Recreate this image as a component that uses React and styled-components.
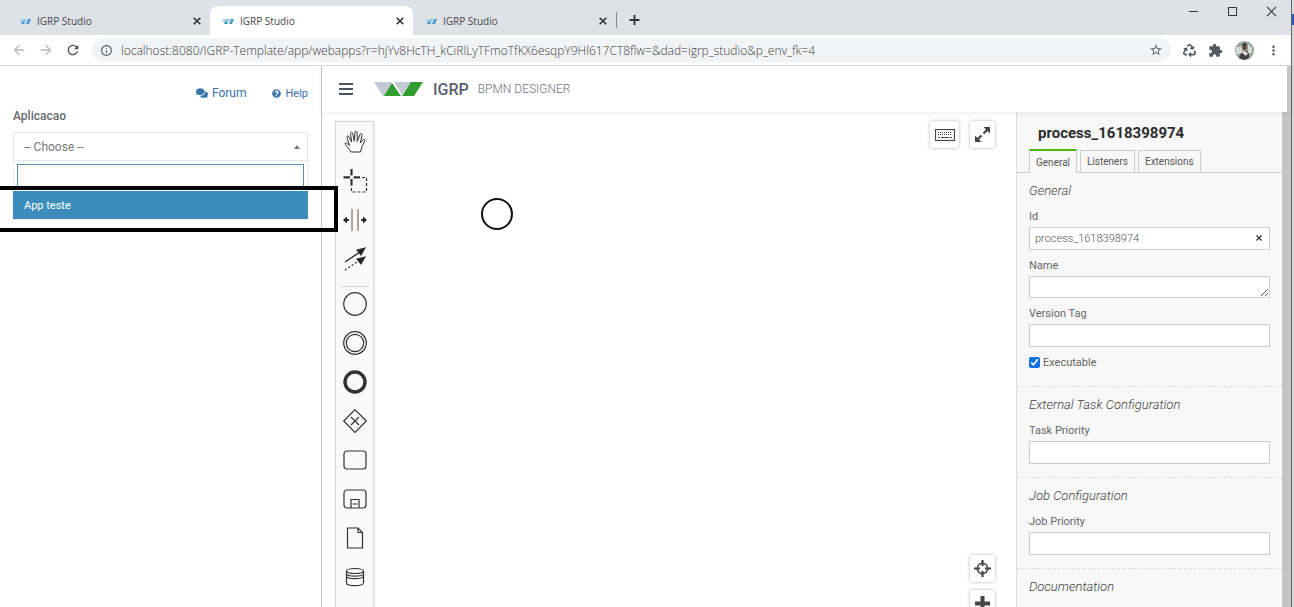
import React from "react";
import styled, { createGlobalStyle, css } from "styled-components";
import { FaComments, FaQuestionCircle, FaRecycle } from "react-icons/fa";
import {
  MdArrowBack,
  MdArrowForward,
  MdRefresh,
  MdInfoOutline,
  MdStarOutline,
  MdExtension,
  MdMoreVert,
} from "react-icons/md";

const GlobalStyle = createGlobalStyle`
  *, *::before, *::after { box-sizing: border-box; }
  body { margin: 0; overflow: hidden; font-family: Roboto, "Liberation Sans", sans-serif; color: #555; background: #fff; }
  button, input, select, textarea { font: inherit; color: inherit; margin: 0; }
  button { padding: 0; border: 0; background: none; cursor: pointer; }
  svg { display: block; flex: none; }
`;

const Desktop = styled.div`
  display: flex;
  height: 100vh;
  overflow: hidden;
`;

const DesktopEdge = styled.div`
  flex: none;
  width: 3px;
  border-left: 1px solid #666;
  background: linear-gradient(#dfe0e2 14px, #1c5fa8 14px, #1c5fa8 25px, #d6d6d6 25px);
`;

const Browser = styled.div`
  flex: 1;
  min-width: 0;
  display: flex;
  flex-direction: column;
`;

/* Browser chrome */
const TabStrip = styled.div`
  flex: none;
  display: flex;
  align-items: flex-end;
  height: 35px;
  padding-left: 7px;
  background: #dee1e6;
  font-family: "Open Sans", "Noto Sans", sans-serif;
`;

const Tab = styled.div`
  display: flex;
  align-items: center;
  gap: 6px;
  width: 203px;
  height: 29px;
  padding: 0 9px 0 11px;
  border-radius: 8px 8px 0 0;
  background: ${(p) => (p.$active ? "#fff" : "transparent")};
  color: #45484c;
  font-size: 10px;
`;

const TabTitle = styled.span`
  flex: 1;
`;

const NewTab = styled.button`
  display: flex;
  align-items: center;
  height: 30px;
`;

const WindowControls = styled.div`
  display: flex;
  gap: 28px;
  margin: 0 14px 0 auto;
  align-self: flex-start;
  padding-top: 6px;
`;

const Toolbar = styled.div`
  flex: none;
  display: flex;
  align-items: center;
  height: 31px;
  padding: 0 10px 0 11px;
  border-bottom: 1px solid #dcdcdc;
  color: #5f6368;
`;

const NavButtons = styled.div`
  display: flex;
  gap: 11px;
  padding-right: 11px;
`;

const IconButton = styled.button`
  display: flex;
  color: ${(p) => (p.$muted ? "#b4b6b9" : "#55585c")};
`;

const Omnibox = styled.label`
  flex: 1;
  display: flex;
  align-items: center;
  gap: 8px;
  height: 24px;
  padding: 0 8px;
  border-radius: 12px;
  background: #f1f3f4;
`;

const Address = styled.input`
  flex: 1;
  min-width: 0;
  padding: 0;
  border: 0;
  outline: 0;
  background: none;
  font-family: "Open Sans", "Noto Sans", sans-serif;
  font-size: 12px;
  font-weight: 300;
  color: #3c4045;
`;

const ToolbarActions = styled.div`
  display: flex;
  align-items: center;
  gap: 12px;
  padding-left: 12px;
`;

/* Page */
const Page = styled.div`
  flex: 1;
  min-height: 0;
  display: flex;
`;

const Sidebar = styled.aside`
  flex: none;
  width: 322px;
  padding: 18px 13px 0;
  border-right: 1px solid #c9c9c9;
`;

const Links = styled.nav`
  display: flex;
  justify-content: flex-end;
  align-items: center;
  gap: 26px;
  height: 18px;
`;

const TextLink = styled.a`
  display: flex;
  align-items: center;
  gap: 4px;
  color: #3a73a8;
  text-decoration: none;
  font-size: ${(p) => (p.$large ? 12 : 11)}px;
`;

const SelectLabel = styled.label`
  display: block;
  margin: 6px 0 8px;
  font-size: 12px;
  line-height: 16px;
  font-weight: 500;
  color: #666a70;
`;

const SelectBox = styled.div`
  position: relative;
  border: 1px solid #e6e6e6;
  &::after {
    content: "";
    position: absolute;
    right: 7px;
    top: 12px;
    border: 3px solid transparent;
    border-top: 0;
    border-bottom: 4px solid #777;
  }
`;

const Select = styled.select`
  display: block;
  width: 100%;
  height: 27px;
  padding: 0 10px;
  border: 0;
  appearance: none;
  background: #fff;
  color: #777;
  font-size: 12px;
`;

const SearchRow = styled.div`
  padding: 3px 3px 0;
  border: solid #eee;
  border-width: 0 1px;
`;

const SearchInput = styled.input`
  display: block;
  width: 100%;
  height: 25px;
  padding: 0 6px;
  border: 1px solid #5c8fb5;
  outline: 0;
`;

const Options = styled.div`
  padding-top: 2px;
`;

const Option = styled.button`
  display: block;
  width: 100%;
  height: 28px;
  padding: 0 11px;
  background: #3c8dbc;
  color: #fff;
  font-size: 11px;
  text-align: left;
`;

const Highlight = styled.div`
  position: absolute;
  z-index: 1;
  top: 186px;
  left: -4px;
  width: 342px;
  height: 46px;
  border: 4px solid #000;
  pointer-events: none;
`;

const Main = styled.main`
  flex: 1;
  min-width: 0;
  display: flex;
  flex-direction: column;
`;

const Header = styled.header`
  position: relative;
  flex: none;
  display: flex;
  align-items: center;
  height: 46px;
  padding: 0 16px;
  border-right: 4px solid #c6c6c6;
  background: #fff;
  box-shadow: 0 1px 6px rgba(0, 0, 0, 0.08);
`;

const Logo = styled.svg`
  margin: 0 10px 0 20px;
`;

const Brand = styled.span`
  margin-right: 9px;
  color: #5b5f6d;
  font-size: 16px;
  font-weight: 500;
`;

const Product = styled.span`
  color: #6e7280;
  font-size: 12px;
  font-weight: 300;
`;

const Workspace = styled.div`
  flex: 1;
  min-height: 0;
  display: flex;
`;

const Canvas = styled.section`
  position: relative;
  flex: 1;
  min-width: 0;
  padding: 9px 0 0 13px;
`;

const Palette = styled.div`
  display: flex;
  flex-direction: column;
  align-items: center;
  gap: 11px;
  width: 39px;
  height: 100%;
  padding-top: 6px;
  border: 1px solid #d6d6d6;
  border-bottom: 0;
  background: #fafafa;
  box-shadow: 1px 0 2px rgba(0, 0, 0, 0.08);
`;

const PaletteButton = styled.button`
  flex: none;
  width: 28px;
  height: 28px;
`;

const PaletteRule = styled.hr`
  width: 29px;
  margin: 2px 0 -8px;
  border: 0;
  border-top: 1px solid #d6d6d6;
`;

const StartEvent = styled.svg`
  position: absolute;
  left: 158px;
  top: 85px;
`;

const floating = css`
  position: absolute;
  right: 21px;
  display: flex;
`;

const TopControls = styled.div`
  ${floating}
  top: 9px;
  gap: 11px;
`;

const ZoomControls = styled.div`
  ${floating}
  bottom: -10px;
  flex-direction: column;
  gap: 8px;
`;

const ControlButton = styled.button`
  display: flex;
  align-items: center;
  justify-content: center;
  width: ${(p) => (p.$wide ? 29 : 25)}px;
  height: 27px;
  border-radius: 2px;
  background: #fff;
  box-shadow: 0 0 3px rgba(0, 0, 0, 0.35);
`;

const Properties = styled.aside`
  flex: none;
  width: 275px;
  padding-top: 12px;
  border-left: 1px solid #ddd;
  border-right: 9px solid #c4c4c4;
  background: #f8f8f8;
  overflow: hidden;
`;

const ProcessTitle = styled.h1`
  margin: 0 0 7px 21px;
  color: #2c2c2c;
  font-size: 15px;
  line-height: 18px;
  font-weight: 700;
`;

const PanelTabs = styled.div`
  display: flex;
  gap: 3px;
  height: 24px;
  padding-left: 12px;
  border-bottom: 1px solid #ccc;
`;

const PanelTab = styled.button`
  height: ${(p) => (p.$active ? 24 : 22)}px;
  align-self: flex-end;
  margin-bottom: ${(p) => (p.$active ? -1 : 0)}px;
  padding: 0 6px;
  border: 1px solid #ccc;
  border-bottom: 0;
  border-top: ${(p) => (p.$active ? "2px solid #52b415" : "1px solid #ccc")};
  background: #f8f8f8;
  color: #555;
  font-size: 10px;
`;

const Group = styled.section`
  padding: 9px 12px 13px;
  border-bottom: 1px dashed #ddd;
`;

const GroupTitle = styled.h2`
  margin: 0 0 9px;
  font-size: 13px;
  line-height: 18px;
  font-weight: 300;
  font-style: italic;
  color: #444;
`;

const Field = styled.div`
  position: relative;
  & + & { margin-top: 8px; }
`;

const FieldLabel = styled.label`
  display: flex;
  align-items: center;
  gap: 3px;
  margin-bottom: 3px;
  font-size: 11px;
  line-height: 15px;
  color: #666;
`;

const fieldBox = css`
  display: block;
  width: 100%;
  padding: 0 5px;
  border: 1px solid #ccc;
  background: #fff;
  font-size: 11px;
  font-weight: 300;
`;

const TextInput = styled.input`
  ${fieldBox}
  height: 23px;
`;

const TextArea = styled.textarea`
  ${fieldBox}
  height: 22px;
  resize: vertical;
`;

const ClearButton = styled.button`
  position: absolute;
  right: 8px;
  bottom: 7px;
  height: 10px;
`;

const Checkbox = styled.input`
  width: 11px;
  height: 11px;
  accent-color: #0b70e0;
`;

const Avatar = () => (
  <svg width="19" height="19" viewBox="0 0 19 19">
    <circle cx="9.500" cy="9.500" r="9.500" fill="#99a19b" />
    <path d="M1 6h6v7H1zM13 3l4 4v5h-4z" fill="#d7dcd8" />
    <path d="M4 17l2-5 2-2h4l2 3v4a9 9 0 0 1-10 0z" fill="#424344" />
    <path d="M6 11l3-1 4 2-2 3z" fill="#e8e1dc" />
    <ellipse cx="9.500" cy="6" rx="2.300" ry="3" fill="#5f4539" />
    <path d="M7 4q2.500-4 5 0z" fill="#292522" />
  </svg>
);

const Favicon = () => (
  <svg width="13" height="8" viewBox="0 0 13 8">
    <path d="M0 2h6L4 7z" fill="#bcd8ea" />
    <path d="M3 7l2-4 2 4zM8 7l2-5h3l-2 5z" fill="#4a9bcb" />
    <path d="M5 2h4L7 6z" fill="#8fc1df" />
  </svg>
);

const Cross = ({ size = 8, width = 1.6, color = "#333" }) => (
  <svg width={size} height={size} viewBox="0 0 8 8" stroke={color} strokeWidth={width}>
    <path d="M.7.7l6.600 6.600M7.300.7L.7 7.300" />
  </svg>
);

const paletteTools = [
  ["Hand tool", <path key="a" strokeWidth="1" d="M10 24L8.500 21.500L4.300 16.500c-.8-1.100.4-2.100 1.500-1.300L8.500 17.500L6 9.500c-.5-1.600 1.300-2.200 1.900-.6L10.700 14L9.500 5.500c-.2-1.600 1.900-1.900 2.200-.2L13.300 13L14 4.500c.1-1.600 2.200-1.500 2.200.1L16.200 13.500L19 6.500c.5-1.400 2.400-.8 2 .7L19.300 15L22.300 11.500c.9-1 2.300 0 1.600 1.200L21 18.500L19.500 24z" />],
  ["Lasso tool", <g key="a"><path d="M10.500 2v6.500M10.500 12v6.500M2.500 10.300h6.500M12.500 10.300h6.500" strokeWidth="2.200" /><path d="M21 10.500h4.500V25H10.500v-5" strokeDasharray="3 2" /></g>],
  ["Space tool", <g key="a"><path d="M11 3v22M17 3v22" stroke="#776f68" /><path d="M8 14H4M20 14h4" strokeWidth="2" /><path d="M2 14l4-3.500v7zM26 14l-4-3.500v7z" fill="#222" stroke="none" /></g>],
  ["Connect tool", <g key="a"><path d="M4 17L19 7" strokeWidth="1.500" /><path d="M4 25l15-10" strokeDasharray="2 2" /><path d="M24 3l-8 2 4 5zM24 12l-8 2 4 5z" fill="#222" /></g>],
];

const paletteShapes = [
  ["Start event", <circle key="a" cx="14" cy="14" r="11.300" />],
  ["Intermediate event", <g key="a"><circle cx="14" cy="14" r="11.300" /><circle cx="14" cy="14" r="8.700" /></g>],
  ["End event", <circle key="a" cx="14" cy="14" r="10" strokeWidth="3.400" />],
  ["Gateway", <path key="a" d="M14 2.700L25.300 14 14 25.300 2.700 14zM10 10l8 8M18 10l-8 8" />],
  ["Task", <rect key="a" x="3" y="5" width="22" height="18" rx="3" />],
  ["Sub process", <g key="a"><rect x="3" y="5" width="22" height="18" rx="3" /><path d="M10 23v-8.500h8V23M11.500 19h5" /></g>],
  ["Data object", <path key="a" d="M6.500 4H17l4.500 4.500V24h-15zM17 4v4.500h4.500" />],
  ["Data store", <g key="a"><ellipse cx="14" cy="8" rx="8.500" ry="2.500" /><path d="M5.500 8v12c0 3.500 17 3.500 17 0V8M5.500 10.500c0 3.500 17 3.500 17 0M5.500 13c0 3.500 17 3.500 17 0" /></g>],
];

function Tools({ items }) {
  return items.map(([name, drawing]) => (
    <PaletteButton key={name} aria-label={name}>
      <svg width="28" height="28" viewBox="0 0 28 28" fill="none" stroke="#333" strokeWidth="1.200">
        {drawing}
      </svg>
    </PaletteButton>
  ));
}

function BrowserTab({ active }) {
  return (
    <Tab $active={active}>
      <Favicon />
      <TabTitle>IGRP Studio</TabTitle>
      <button aria-label="Close tab"><Cross /></button>
    </Tab>
  );
}

function TextField({ id, label, value = "" }) {
  return (
    <Field>
      <FieldLabel htmlFor={id}>{label}</FieldLabel>
      <TextInput id={id} defaultValue={value} />
      {value && <ClearButton aria-label="Clear"><Cross size={6} /></ClearButton>}
    </Field>
  );
}

export default function App() {
  return (
    <Desktop>
      <GlobalStyle />
      <Browser>
        <TabStrip>
          <BrowserTab />
          <BrowserTab active />
          <BrowserTab />
          <NewTab aria-label="New tab">
            <svg width="24" height="18" viewBox="0 0 24 18" stroke="#333">
              <path d="M.5 1v16" stroke="#888" />
              <path d="M13.500 9h10M18.500 4v10" strokeWidth="1.800" />
            </svg>
          </NewTab>
          <WindowControls>
            <button aria-label="Minimize">
              <svg width="11" height="11" stroke="#333"><path d="M1 5.500h9" /></svg>
            </button>
            <button aria-label="Maximize">
              <svg width="11" height="11" stroke="#333" fill="none"><path d="M1.500 1.500h8v8h-8z" /></svg>
            </button>
            <button aria-label="Close"><Cross size={11} width={0.8} /></button>
          </WindowControls>
        </TabStrip>
        <Toolbar>
          <NavButtons>
            <IconButton $muted aria-label="Back"><MdArrowBack size={16} /></IconButton>
            <IconButton $muted aria-label="Forward"><MdArrowForward size={16} /></IconButton>
            <IconButton aria-label="Reload"><MdRefresh size={16} /></IconButton>
          </NavButtons>
          <Omnibox>
            <MdInfoOutline size={13} />
            <Address
              aria-label="Address"
              defaultValue="localhost:8080/IGRP-Template/app/webapps?r=hjYv8HcTH_kCiRlLyTFmoTfKX6esqpY9Hl617CT8flw=&dad=igrp_studio&p_env_fk=4"
            />
            <MdStarOutline size={14} />
          </Omnibox>
          <ToolbarActions>
            <IconButton aria-label="Recycle extension"><FaRecycle size={13} /></IconButton>
            <IconButton aria-label="Extensions"><MdExtension size={15} /></IconButton>
            <IconButton aria-label="Profile"><Avatar /></IconButton>
            <IconButton aria-label="Menu"><MdMoreVert size={15} /></IconButton>
          </ToolbarActions>
        </Toolbar>
        <Page>
          <Sidebar>
            <Links>
              <TextLink $large href="#forum"><FaComments size={12} />Forum</TextLink>
              <TextLink href="#help"><FaQuestionCircle size={9} />Help</TextLink>
            </Links>
            <SelectLabel htmlFor="aplicacao">Aplicacao</SelectLabel>
            <SelectBox>
              <Select id="aplicacao" defaultValue="">
                <option value="">-- Choose --</option>
              </Select>
            </SelectBox>
            <SearchRow><SearchInput aria-label="Search applications" /></SearchRow>
            <Options role="listbox" aria-label="Applications">
              <Option role="option" aria-selected="true">App teste</Option>
            </Options>
            <Highlight />
          </Sidebar>
          <Main>
            <Header>
              <button aria-label="Toggle menu">
                <svg width="16" height="14" stroke="#4e5260" strokeWidth="2">
                  <path d="M1 2h14M1 7h14M1 12h14" />
                </svg>
              </button>
              <Logo width="49" height="14" viewBox="0 0 49 14">
                <path d="M0 0h17l4 5-5 7-3 2H9zM20 0h17l-9 13z" fill="#c4c9d3" />
                <path d="M18 1l9 13H10zM37 0h12l-9 14H28z" fill="#2f9e2f" />
              </Logo>
              <Brand>IGRP</Brand>
              <Product>BPMN DESIGNER</Product>
            </Header>
            <Workspace>
              <Canvas>
                <Palette>
                  <Tools items={paletteTools} />
                  <PaletteRule />
                  <Tools items={paletteShapes} />
                </Palette>
                <StartEvent width="34" height="34" fill="#fff" stroke="#111" strokeWidth="2">
                  <circle cx="17" cy="17" r="15" />
                </StartEvent>
                <TopControls>
                  <ControlButton $wide aria-label="Keyboard shortcuts">
                    <svg width="20" height="12" fill="none" stroke="#444">
                      <rect x=".5" y=".5" width="19" height="11" strokeWidth="1.200" />
                      <path d="M3 3.500h14M3 5.500h14" strokeDasharray="1 1" />
                      <path d="M3 8.500h2M6 8.500h8M15 8.500h2" />
                    </svg>
                  </ControlButton>
                  <ControlButton aria-label="Full screen">
                    <svg width="17" height="17" viewBox="0 0 17 17" fill="#444" stroke="#444">
                      <path d="M9.500 7.500L14 3M7.500 9.500L3 14" strokeWidth="2.200" />
                      <path d="M9.500 1H16v6.500zM1 9.500V16h6.500z" stroke="none" />
                    </svg>
                  </ControlButton>
                </TopControls>
                <ZoomControls>
                  <ControlButton aria-label="Reset zoom">
                    <svg width="17" height="17" viewBox="0 0 17 17" fill="none" stroke="#444">
                      <circle cx="8.500" cy="8.500" r="5.200" strokeWidth="1.500" />
                      <path d="M8.500 0v6M8.500 11v6M0 8.500h6M11 8.500h6" strokeWidth="2.200" />
                    </svg>
                  </ControlButton>
                  <ControlButton aria-label="Zoom in">
                    <svg width="15" height="15" stroke="#444" strokeWidth="4">
                      <path d="M0 7.500h15M7.500 0v15" />
                    </svg>
                  </ControlButton>
                </ZoomControls>
              </Canvas>
              <Properties>
                <ProcessTitle>process_1618398974</ProcessTitle>
                <PanelTabs>
                  <PanelTab $active>General</PanelTab>
                  <PanelTab>Listeners</PanelTab>
                  <PanelTab>Extensions</PanelTab>
                </PanelTabs>
                <Group>
                  <GroupTitle>General</GroupTitle>
                  <TextField id="process-id" label="Id" value="process_1618398974" />
                  <Field>
                    <FieldLabel htmlFor="name">Name</FieldLabel>
                    <TextArea id="name" />
                  </Field>
                  <TextField id="version-tag" label="Version Tag" />
                  <Field>
                    <FieldLabel>
                      <Checkbox type="checkbox" defaultChecked />
                      Executable
                    </FieldLabel>
                  </Field>
                </Group>
                <Group>
                  <GroupTitle>External Task Configuration</GroupTitle>
                  <TextField id="task-priority" label="Task Priority" />
                </Group>
                <Group>
                  <GroupTitle>Job Configuration</GroupTitle>
                  <TextField id="job-priority" label="Job Priority" />
                </Group>
                <Group>
                  <GroupTitle>Documentation</GroupTitle>
                </Group>
              </Properties>
            </Workspace>
          </Main>
        </Page>
      </Browser>
      <DesktopEdge />
    </Desktop>
  );
}
